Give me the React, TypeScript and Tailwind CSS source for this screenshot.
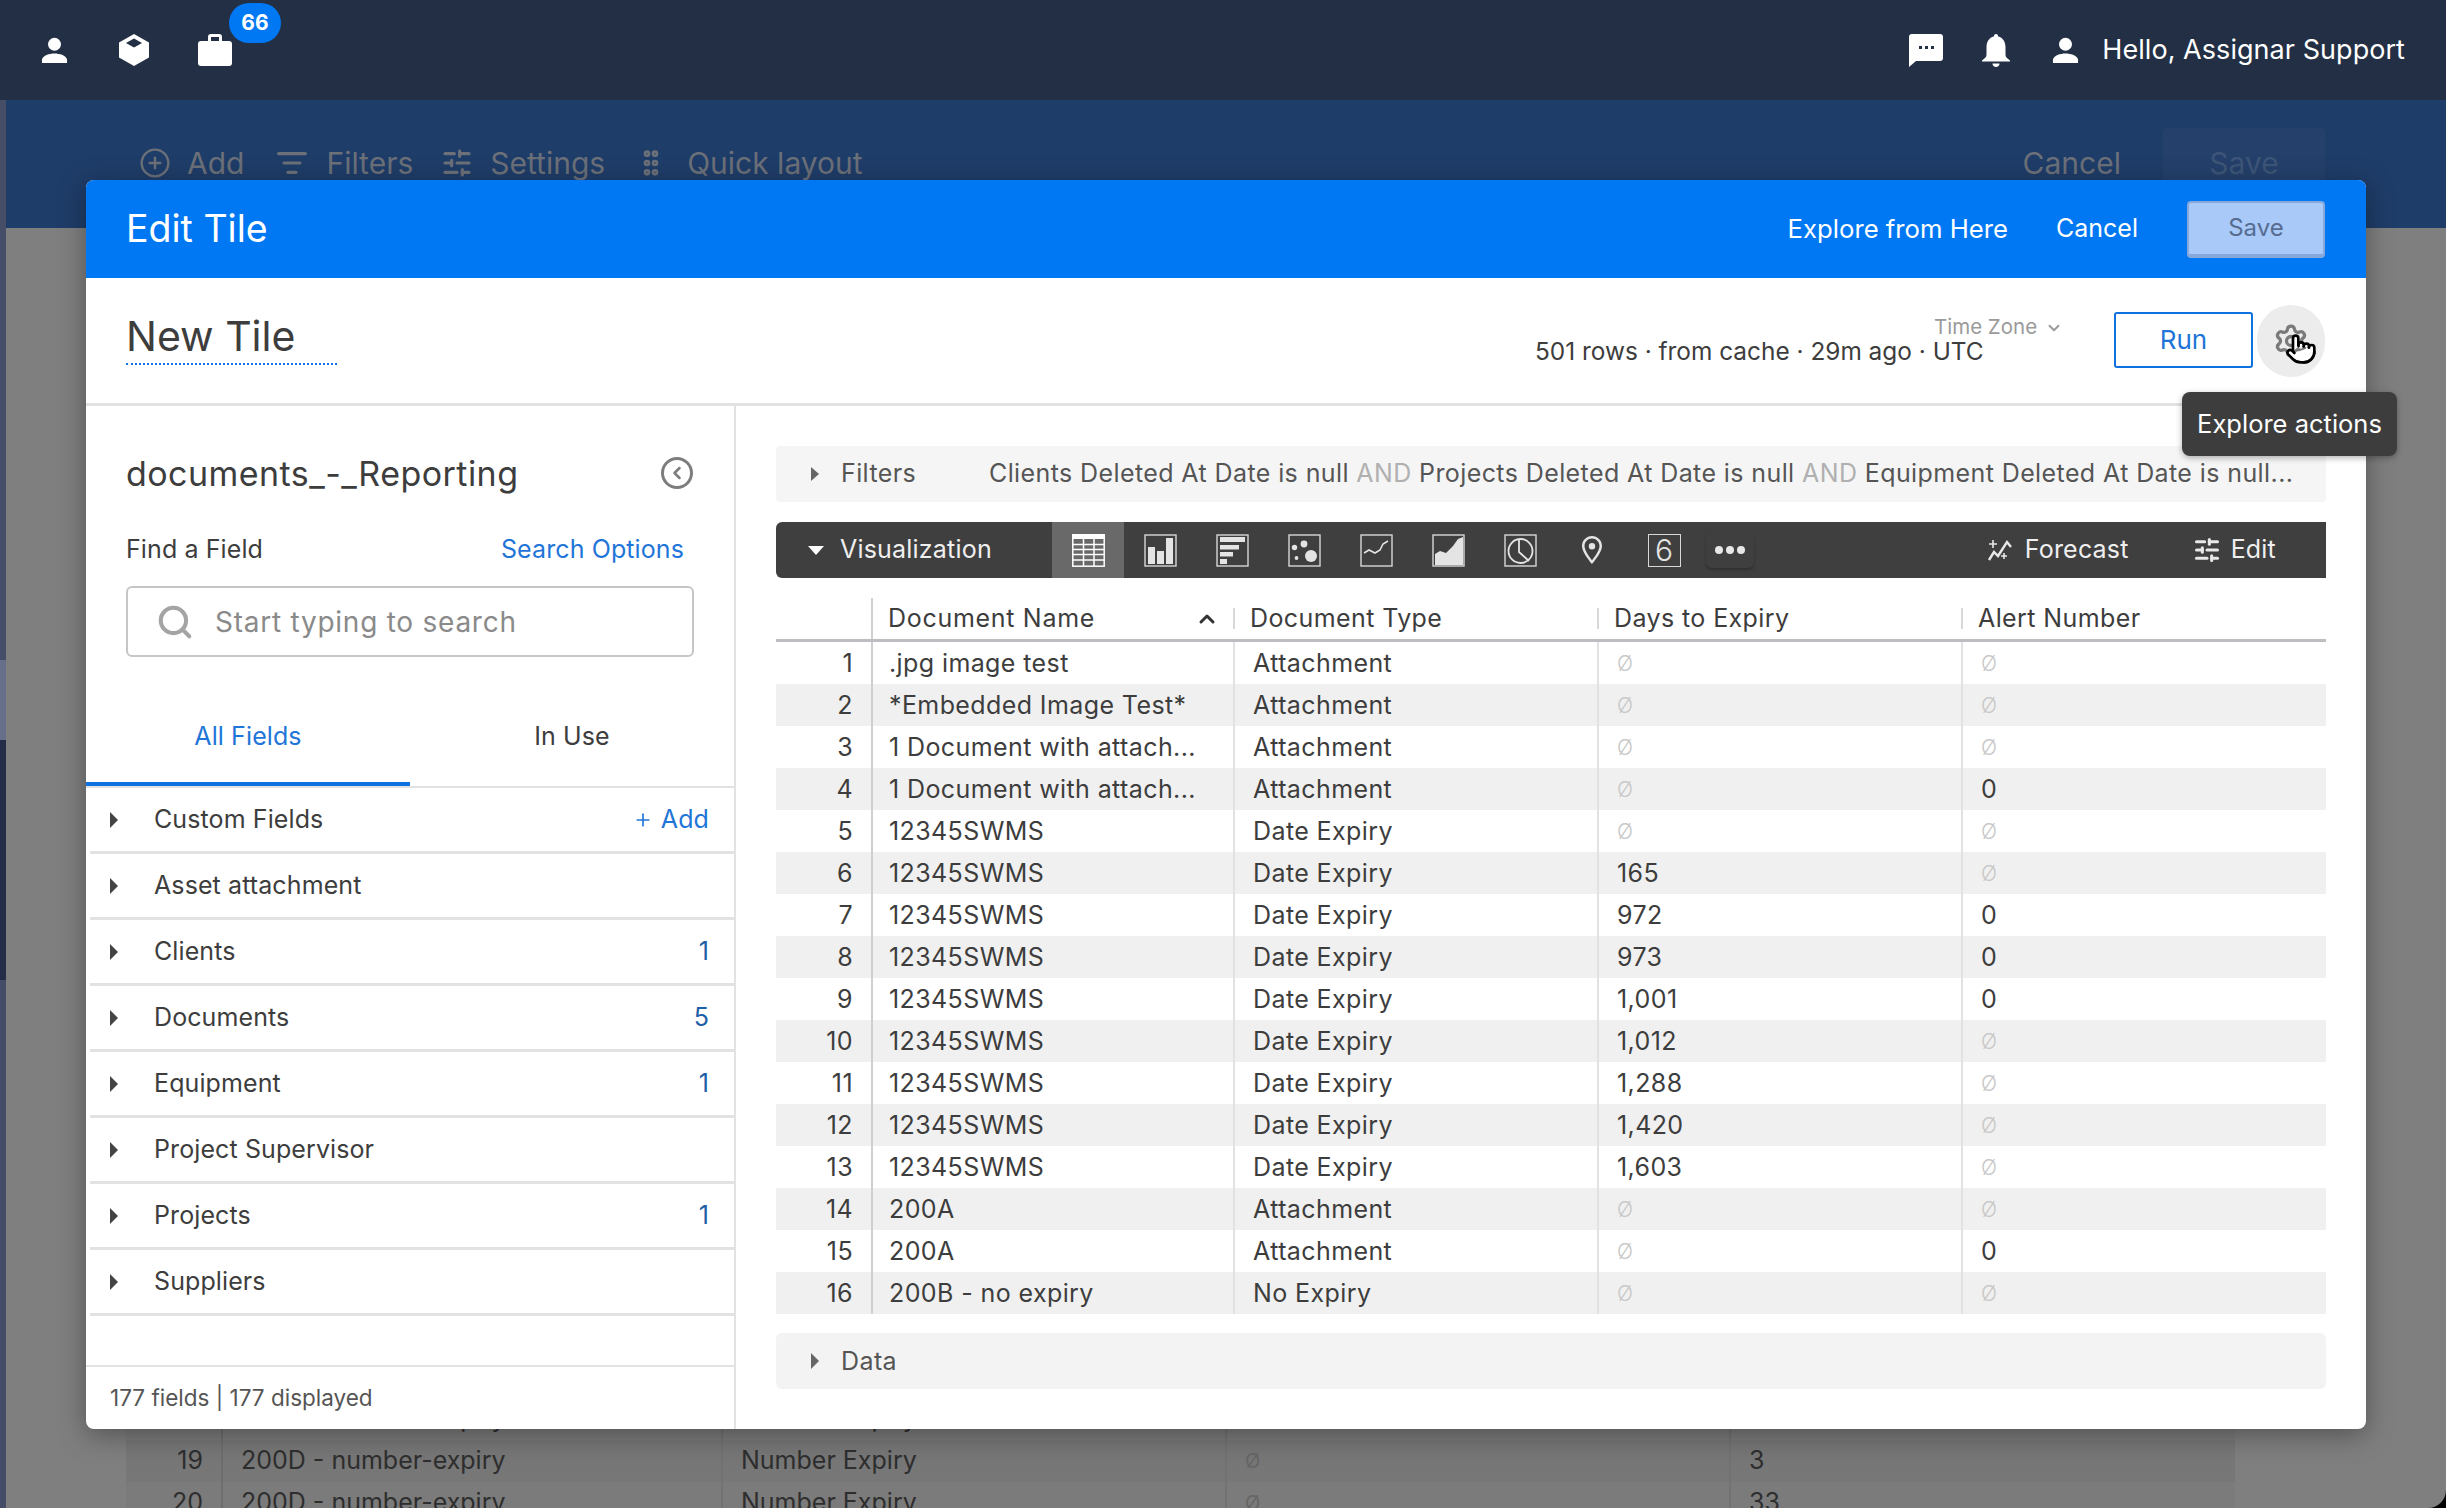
import { CirclePlus, ChevronUp, ChevronDown, ChevronLeft, GripVertical, ListFilter, Plus, Search, Settings, SlidersHorizontal, Pointer } from "lucide-react";

const fieldGroups = [
  { name: "Custom Fields", count: "add" },
  { name: "Asset attachment", count: "" },
  { name: "Clients", count: "1" },
  { name: "Documents", count: "5" },
  { name: "Equipment", count: "1" },
  { name: "Project Supervisor", count: "" },
  { name: "Projects", count: "1" },
  { name: "Suppliers", count: "" },
];

const rows = [
  { name: ".jpg image test", type: "Attachment", days: null, alert: null },
  { name: "*Embedded Image Test*", type: "Attachment", days: null, alert: null },
  { name: "1 Document with attach...", type: "Attachment", days: null, alert: null },
  { name: "1 Document with attach...", type: "Attachment", days: null, alert: "0" },
  { name: "12345SWMS", type: "Date Expiry", days: null, alert: null },
  { name: "12345SWMS", type: "Date Expiry", days: "165", alert: null },
  { name: "12345SWMS", type: "Date Expiry", days: "972", alert: "0" },
  { name: "12345SWMS", type: "Date Expiry", days: "973", alert: "0" },
  { name: "12345SWMS", type: "Date Expiry", days: "1,001", alert: "0" },
  { name: "12345SWMS", type: "Date Expiry", days: "1,012", alert: null },
  { name: "12345SWMS", type: "Date Expiry", days: "1,288", alert: null },
  { name: "12345SWMS", type: "Date Expiry", days: "1,420", alert: null },
  { name: "12345SWMS", type: "Date Expiry", days: "1,603", alert: null },
  { name: "200A", type: "Attachment", days: null, alert: null },
  { name: "200A", type: "Attachment", days: null, alert: "0" },
  { name: "200B - no expiry", type: "No Expiry", days: null, alert: null },
];

const behindRows = [
  { n: 18, a: "200D - number-expiry", b: "Number Expiry", c: "", d: "" },
  { n: 19, a: "200D - number-expiry", b: "Number Expiry", c: "Ø", d: "3" },
  { n: 20, a: "200D - number-expiry", b: "Number Expiry", c: "Ø", d: "33" },
];

function Person({ className }: { className?: string }) {
  return (
    <svg viewBox="0 0 28 28" className={className} fill="white">
      <circle cx="14" cy="7.5" r="6.7" />
      <path d="M1 27v-3c0-5 8-7 13-7s13 2 13 7v3z" />
    </svg>
  );
}

function Caret() {
  return <div className="h-0 w-0 border-y-[8px] border-l-[8px] border-y-transparent border-l-[#444]" />;
}

function Nil() {
  return <span className="text-[21px] font-light tracking-normal text-[#c8c8c8]">Ø</span>;
}

function Frame({ children }: { children: React.ReactNode }) {
  return (
    <svg viewBox="0 0 33 33" className="h-[33px] w-[33px]" fill="#e4e4e4" stroke="none">
      <rect x="1" y="1" width="31" height="31" fill="none" stroke="#d8d8d8" strokeWidth="1.4" />
      {children}
    </svg>
  );
}

function VizIcons() {
  return (
    <div className="flex h-full items-center">
      <div className="flex h-full w-[72px] items-center justify-center bg-[#696969]">
        <svg viewBox="0 0 33 33" className="h-[33px] w-[33px]" fill="none" stroke="#fff" strokeWidth="1.5">
          <rect x="0.8" y="0.8" width="31.4" height="31.4" />
          <rect x="0" y="0" width="33" height="5" fill="#fff" stroke="none" />
          <path d="M0 10.5h33M0 15.5h33M0 20.5h33M0 26h33M11.5 5v27M22 5v27" />
        </svg>
      </div>
      <div className="flex w-[72px] justify-center">
        <Frame>
          <rect x="4" y="13" width="7" height="17" />
          <rect x="13" y="17" width="7" height="13" />
          <rect x="22" y="4" width="7" height="26" />
        </Frame>
      </div>
      <div className="flex w-[72px] justify-center">
        <Frame>
          <rect x="4" y="3" width="25" height="5" />
          <rect x="4" y="11" width="19" height="4.5" />
          <rect x="4" y="18" width="13" height="4.5" />
          <rect x="4" y="25" width="7" height="5" />
        </Frame>
      </div>
      <div className="flex w-[72px] justify-center">
        <Frame>
          <circle cx="6.5" cy="13.5" r="2.7" />
          <circle cx="16" cy="10" r="3.4" />
          <circle cx="8.5" cy="24" r="1.9" />
          <circle cx="23" cy="22" r="6" />
        </Frame>
      </div>
      <div className="flex w-[72px] justify-center">
        <Frame>
          <path d="M4 19l5-3 6 3 5-3 3-6 5-3" fill="none" stroke="#e4e4e4" strokeWidth="1.6" />
        </Frame>
      </div>
      <div className="flex w-[72px] justify-center">
        <Frame>
          <path d="M3 20l5-3 6 2 7-7 5-7 5-2v28H3z" />
        </Frame>
      </div>
      <div className="flex w-[72px] justify-center">
        <Frame>
          <circle cx="16.5" cy="17" r="12" fill="none" stroke="#e4e4e4" strokeWidth="1.8" />
          <path d="M15 5v13l10 9" fill="none" stroke="#e4e4e4" strokeWidth="1.8" />
        </Frame>
      </div>
      <div className="flex w-[72px] justify-center">
        <svg viewBox="0 0 20 28" className="h-[28px] w-[20px]">
          <path fillRule="evenodd" fill="#e4e4e4" d="M10 0C4.500 0 0 4.400 0 10c0 6.800 10 18 10 18s10-11.200 10-18C20 4.400 15.500 0 10 0zm0 2.500c4.100 0 7.500 3.400 7.500 7.500 0 4-4.500 10.600-7.500 14.200C7 20.600 2.500 14 2.500 10 2.500 5.900 5.900 2.500 10 2.500zM10 7a3.200 3.200 0 100 6.400A3.200 3.200 0 0010 7z" />
        </svg>
      </div>
      <div className="flex w-[72px] justify-center">
        <div className="flex h-[33px] w-[33px] items-center justify-center border-[1.5px] border-[#d8d8d8] text-[30px] font-light leading-none tracking-normal text-[#e4e4e4]">6</div>
      </div>
      <div className="ml-[6px] flex h-[36px] w-[48px] items-center justify-center gap-[3px] rounded-md shadow-[0_2px_3px_rgba(0,0,0,0.25)]">
        <span className="h-[8px] w-[8px] rounded-full bg-[#e8e8e8]" />
        <span className="h-[8px] w-[8px] rounded-full bg-[#e8e8e8]" />
        <span className="h-[8px] w-[8px] rounded-full bg-[#e8e8e8]" />
      </div>
    </div>
  );
}

function FieldPanel() {
  return (
    <div className="flex w-[650px] flex-col border-r-2 border-[#e2e2e2] text-[25px] tracking-[0.1px] text-[#3d3d3d]">
      <div className="mt-[19px] flex h-[96px] items-center justify-between pl-[40px] pr-[41px]">
        <span className="text-[34px] tracking-[0.45px]">documents_-_Reporting</span>
        <div className="flex h-[32px] w-[32px] items-center justify-center rounded-full border-[3px] border-[#7d7d7d]">
          <ChevronLeft size={20} strokeWidth={3} className="text-[#7d7d7d]" />
        </div>
      </div>
      <div className="mt-[11px] flex h-[36px] items-center justify-between pl-[40px] pr-[50px]">
        <span>Find a Field</span>
        <span className="text-[#1f75d8]">Search Options</span>
      </div>
      <div className="ml-[40px] mt-[18px] flex h-[71px] w-[568px] items-center rounded-md border-2 border-[#c6c6c6] pl-[28px]">
        <Search size={38} strokeWidth={2.6} className="text-[#a4a4a4]" />
        <span className="ml-[21px] text-[28px] tracking-[0.75px] text-[#8a8a8a]">Start typing to search</span>
      </div>
      <div className="mt-[30px] flex h-[101px] border-b-2 border-[#e2e2e2]">
        <div className="flex h-[99px] w-[324px] items-center justify-center border-b-4 border-[#0f72e0] pt-[4px] text-[#1f75d8]">All Fields</div>
        <div className="flex h-[99px] w-[324px] items-center justify-center">In Use</div>
      </div>
      <div className="flex flex-col pl-[4px]">
        {fieldGroups.map((g) => (
          <div key={g.name} className="flex h-[66px] items-center border-b-[3px] border-[#e2e2e2] pl-[20px] pr-[25px]">
            <Caret />
            <span className="ml-[36px] flex-1">{g.name}</span>
            {g.count === "add" ? (
              <span className="flex items-center gap-[8px] text-[#1f75d8]">
                <Plus size={20} strokeWidth={2} />
                Add
              </span>
            ) : (
              <span className="text-[#1f5fa8]">{g.count}</span>
            )}
          </div>
        ))}
      </div>
      <div className="flex-1" />
      <div className="flex h-[64px] items-center border-t-2 border-[#e2e2e2] pl-[24px] text-[22.5px] tracking-normal text-[#555]">177 fields | 177 displayed</div>
    </div>
  );
}

function ResultsTable() {
  const cols = "grid grid-cols-[95px_362px_364px_364px_365px]";
  return (
    <div className="text-[25px] tracking-[0.4px] text-[#3d3d3d]">
      <div className={`${cols} mt-[20px] h-[44px] border-b-[3px] border-[#bcbec2]`}>
        <div />
        <div className="flex items-center justify-between border-l-2 border-[#d0d0d0] pl-[15px] pr-[14px] tracking-[0.7px]">
          <span>Document Name</span>
          <ChevronUp size={24} strokeWidth={3} className="text-[#333]" />
        </div>
        {["Document Type", "Days to Expiry", "Alert Number"].map((h) => (
          <div key={h} className="flex items-center pl-[16px]">
            <div className="-ml-[16px] mr-[15px] h-[21px] w-[2px] bg-[#d8d8d8]" />
            <span>{h}</span>
          </div>
        ))}
      </div>
      {rows.map((r, i) => (
        <div key={i} className={`${cols} h-[42px] ${i % 2 === 1 ? "bg-[#f0f0f0]" : ""}`}>
          <div className="flex items-center justify-end pr-[18px] pt-[2px]">{i + 1}</div>
          <div className="flex items-center truncate border-l-2 border-[#cfcfcf] pl-[16px] pt-[2px]">{r.name}</div>
          <div className="flex items-center border-l-2 border-[#e2e2e2] pl-[18px] pt-[2px]">{r.type}</div>
          <div className="flex items-center border-l-2 border-[#e2e2e2] pl-[18px] pt-[2px]">{r.days ?? <Nil />}</div>
          <div className="flex items-center border-l-2 border-[#e2e2e2] pl-[18px] pt-[2px]">{r.alert ?? <Nil />}</div>
        </div>
      ))}
    </div>
  );
}

function Modal() {
  return (
    <div className="absolute left-[86px] top-[180px] flex h-[1249px] w-[2280px] flex-col rounded-lg bg-white shadow-[0_6px_28px_rgba(0,0,0,0.35)]">
      <div className="flex h-[98px] items-center rounded-t-lg bg-[#0078f4] pl-[40px] pr-[41px] text-white">
        <span className="flex-1 text-[37.5px]">Edit Tile</span>
        <span className="text-[25.7px]">Explore from Here</span>
        <span className="ml-[48px] text-[25px]">Cancel</span>
        <div className="ml-[49px] flex h-[57px] w-[138px] items-center justify-center rounded-sm border-2 border-b-4 border-[#86a8da] bg-[#a9c9f8] text-[24px] text-[#566c91]">Save</div>
      </div>
      <div className="flex h-[128px] items-center border-b-[3px] border-[#e2e2e2] pl-[40px] pr-[41px]">
        <div className="mb-[8px] w-[211px] border-b-2 border-dotted border-[#0f72e0] text-[41px] leading-[54px] text-[#3d3d3d]">New Tile</div>
        <div className="mb-[2px] ml-auto w-[530px] text-[#3d3d3d]">
          <div className="flex h-[24px] items-center whitespace-nowrap pl-[399px] text-[20.5px] text-[#9a9a9a]">
            Time Zone
            <ChevronDown size={18} strokeWidth={2.5} className="ml-[8px]" />
          </div>
          <div className="flex h-[24px] items-center text-[24.4px]">501 rows · from cache · 29m ago · UTC</div>
        </div>
        <div className="mb-[2px] ml-[49px] flex h-[56px] w-[139px] items-center justify-center rounded-[3px] border-2 border-[#0f72e0] text-[26px] text-[#1f75d8]">Run</div>
        <div className="relative ml-[4px] flex h-[72px] w-[68px] items-center justify-center rounded-full bg-[#ececec]">
          <Settings size={36} strokeWidth={2.2} className="text-[#7a7a7a]" />
          <Pointer size={32} strokeWidth={2} fill="white" className="absolute left-[28px] top-[28px] text-black" />
        </div>
      </div>
      <div className="absolute left-[2096px] top-[212px] z-10 flex h-[64px] w-[215px] items-center justify-center rounded-lg bg-[#3d3d3d] text-[25.5px] text-white shadow-[0_2px_6px_rgba(0,0,0,0.3)]">Explore actions</div>
      <div className="flex flex-1">
        <FieldPanel />
        <div className="flex-1 pl-[40px] pr-[40px] pt-[40px]">
          <div className="flex h-[56px] items-center rounded-sm bg-[#f5f5f5] pl-[35px] text-[25px] tracking-[0.4px] text-[#555]">
            <div className="h-0 w-0 border-y-[7px] border-l-[8px] border-y-transparent border-l-[#666]" />
            <span className="ml-[22px] w-[148px]">Filters</span>
            <span className="whitespace-nowrap">
              Clients Deleted At Date is null <span className="text-[#b0b0b0]">AND</span> Projects Deleted At Date is null <span className="text-[#b0b0b0]">AND</span> Equipment Deleted At Date is null...
            </span>
          </div>
          <div className="mt-[20px] flex h-[56px] items-center rounded-l-md bg-[#3f3f3f] text-[25px] tracking-[0.2px] text-[#efefef]">
            <div className="ml-[32px] h-0 w-0 border-x-[8px] border-t-[9px] border-x-transparent border-t-white" />
            <span className="ml-[16px] w-[212px]">Visualization</span>
            <VizIcons />
            <svg viewBox="0 0 26 26" className="ml-auto h-[26px] w-[26px]" fill="none" stroke="#e8e8e8" strokeWidth="2.4">
              <path d="M2 23l5-8 4 4 9-14 4 5" />
              <path d="M6 3v8M2 7h8M17 16v6M14 19h6" strokeWidth="1.6" />
            </svg>
            <span className="ml-[12px]">Forecast</span>
            <SlidersHorizontal size={28} strokeWidth={2.6} className="ml-[64px] text-[#e8e8e8]" />
            <span className="ml-[10px] mr-[50px]">Edit</span>
          </div>
          <ResultsTable />
          <div className="mt-[19px] flex h-[56px] items-center rounded-md bg-[#f3f3f3] pl-[35px] text-[25px] tracking-[0.4px] text-[#555]">
            <div className="h-0 w-0 border-y-[8px] border-l-[8px] border-y-transparent border-l-[#666]" />
            <span className="ml-[22px] pt-[2px]">Data</span>
          </div>
        </div>
      </div>
    </div>
  );
}

export default function App() {
  return (
    <div className="h-[1508px] w-[2446px] overflow-hidden bg-black [font-family:Inter,sans-serif]">
      <div className="relative flex h-full w-full flex-col overflow-hidden rounded-br-[18px] bg-[#7f7f7f]">
        <div className="flex h-[100px] shrink-0 items-center bg-[#222f44] text-white">
          <Person className="ml-[41px] h-[27px] w-[27px]" />
          <svg viewBox="0 0 30 32" className="ml-[51px] h-[32px] w-[30px]">
            <path fillRule="evenodd" fill="white" d="M15 0l15 8.500v15L15 32 0 23.500v-15zM15 4.500L7 9l8 4.500L23 9z" />
          </svg>
          <div className="relative ml-[49px]">
            <svg viewBox="0 0 34 32" className="h-[32px] w-[34px]" fill="white">
              <path fillRule="evenodd" d="M10 7V3a3 3 0 013-3h8a3 3 0 013 3v4h7a3 3 0 013 3v19a3 3 0 01-3 3H3a3 3 0 01-3-3V10a3 3 0 013-3zm3 0h8V3h-8z" />
            </svg>
            <div className="absolute -top-[31px] left-[31px] flex h-[40px] w-[52px] items-center justify-center rounded-full bg-[#0078f4] text-[21px] font-bold">66</div>
          </div>
          <svg viewBox="0 0 34 33" className="ml-auto h-[33px] w-[34px]">
            <path fillRule="evenodd" fill="white" d="M3 0h28a3 3 0 013 3v21a3 3 0 01-3 3H7l-7 6V3a3 3 0 013-3zM10 12v3h3v-3zm6 0v3h3v-3zm6 0v3h3v-3z" />
          </svg>
          <svg viewBox="0 0 28 33" className="ml-[39px] h-[33px] w-[28px]" fill="white">
            <path d="M14 0c1.200 0 2 .9 2 2.200C21 3.500 23.500 8 23.500 13v8c0 2 1.800 3.500 4.500 5.500v1H0v-1C2.700 24.500 4.500 23 4.500 21v-8C4.500 8 7 3.500 12 2.200 12 .9 12.800 0 14 0z" />
            <path d="M10.500 29.500h7c0 2-1.500 3.500-3.500 3.500s-3.500-1.500-3.500-3.500z" />
          </svg>
          <Person className="ml-[42px] h-[27px] w-[27px]" />
          <span className="ml-[23px] mr-[41px] text-[27px] tracking-[0.05px]">Hello, Assignar Support</span>
        </div>
        <div className="flex flex-1">
          <div className="flex w-[6px] shrink-0 flex-col">
            <div className="h-[560px] bg-[#454e66]" />
            <div className="h-[80px] bg-[#66708a]" />
            <div className="h-[240px] bg-[#252c45]" />
            <div className="flex-1 bg-[#454d66]" />
          </div>
          <div className="flex flex-1 flex-col">
            <div className="flex h-[128px] shrink-0 items-start bg-[#1f3d69] pl-[133px] pr-[121px] pt-[28px] text-[#6b7079]">
              <div className="flex h-[70px] flex-1 items-center text-[30px]">
                <CirclePlus size={32} strokeWidth={1.8} />
                <span className="ml-[16px]">Add</span>
                <ListFilter size={32} strokeWidth={2.4} className="ml-[32px]" />
                <span className="ml-[18px]">Filters</span>
                <SlidersHorizontal size={32} strokeWidth={2.4} className="ml-[28px]" />
                <span className="ml-[17px]">Settings</span>
                <GripVertical size={32} strokeWidth={3} className="ml-[30px]" />
                <span className="ml-[20px]">Quick layout</span>
                <span className="ml-auto">Cancel</span>
                <span className="ml-[42px] flex h-[70px] w-[162px] items-center justify-center rounded-sm bg-[#24406b] text-[#3d5578]">Save</span>
              </div>
            </div>
            <div className="flex flex-col pl-[120px] pr-[211px] pt-[1170px] text-[25px] text-[#2e2e2e]">
              {behindRows.map((r) => (
                <div key={r.n} className={`grid h-[42px] shrink-0 grid-cols-[95px_500px_504px_504px_506px] ${r.n % 2 === 1 ? "bg-[#777777]" : "bg-[#7b7b7b]"}`}>
                  <span className="flex items-center justify-end pr-[18px]">{r.n}</span>
                  <span className="flex items-center border-l-2 border-[#6e6e6e] pl-[18px]">{r.a}</span>
                  <span className="flex items-center border-l-2 border-[#727272] pl-[18px]">{r.b}</span>
                  <span className="flex items-center border-l-2 border-[#727272] pl-[18px] text-[20px] text-[#666]">{r.c}</span>
                  <span className="flex items-center border-l-2 border-[#727272] pl-[18px]">{r.d}</span>
                </div>
              ))}
            </div>
          </div>
        </div>
        <Modal />
      </div>
    </div>
  );
}
